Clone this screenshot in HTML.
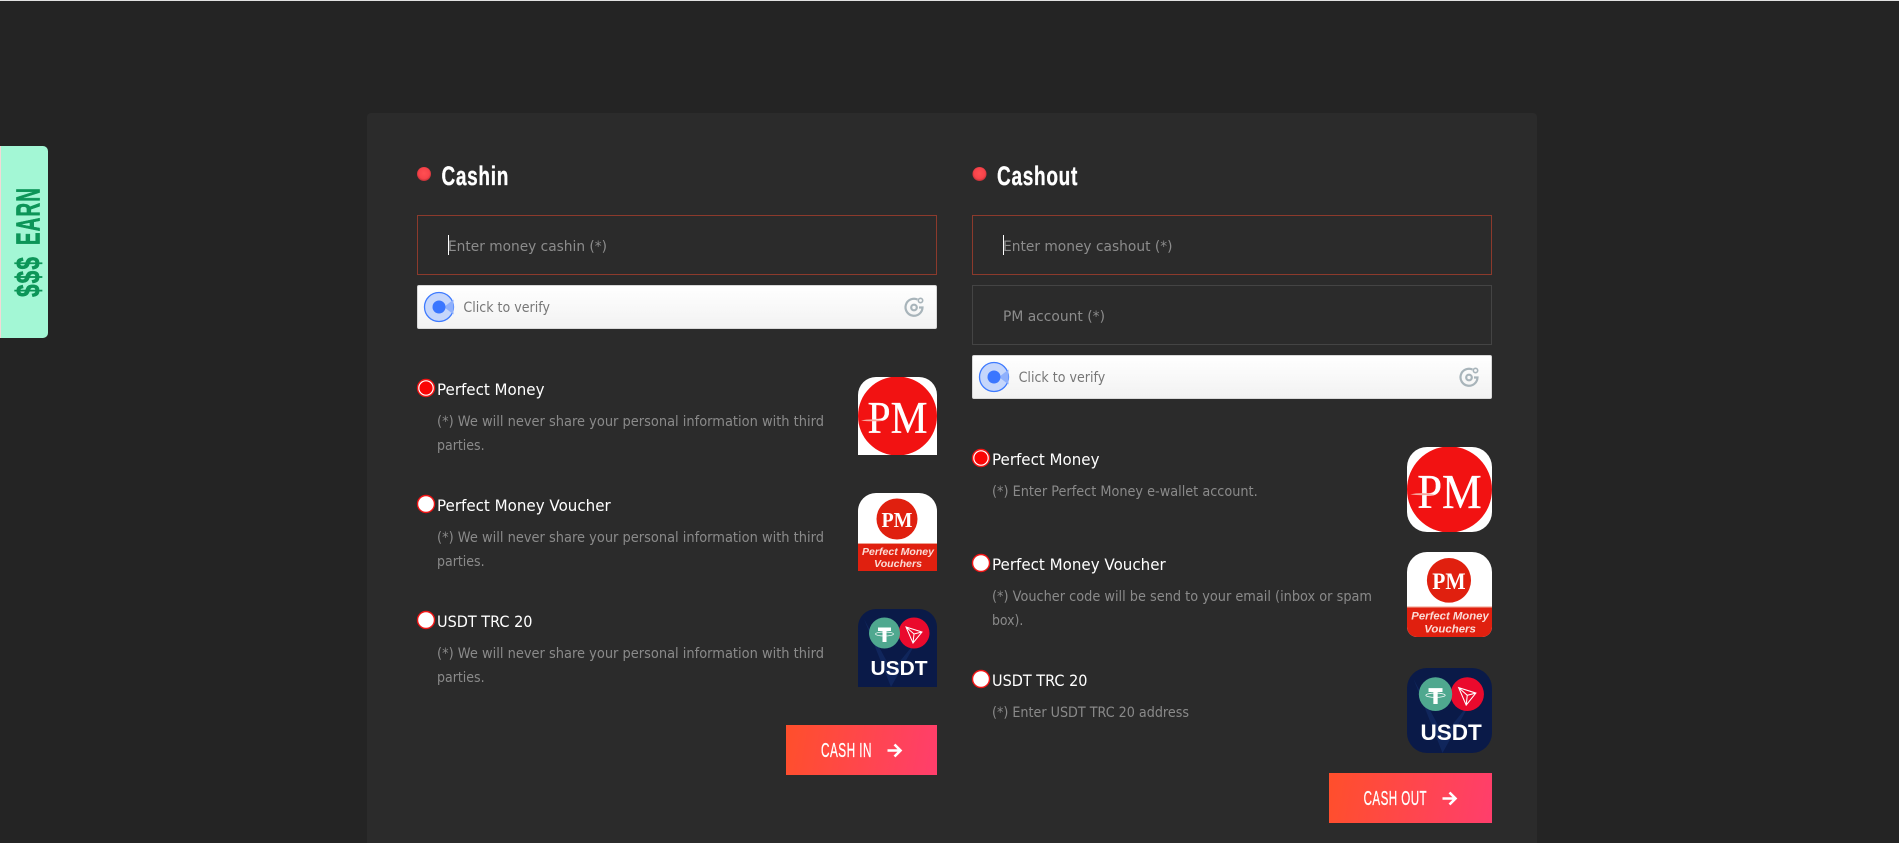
<!DOCTYPE html>
<html lang="en">
<head>
<meta charset="utf-8">
<title>Cashin / Cashout</title>
<style>
html,body{margin:0;padding:0;background:#242424;}
body{width:1899px;height:843px;overflow:hidden;position:relative;}
.a{position:absolute;box-sizing:border-box;}
#top{left:0;top:0;width:1899px;height:1px;background:#e2e2e2;}
#panel{left:367px;top:113px;width:1170px;height:730px;background:#2b2b2b;border-radius:4px 4px 0 0;}
#earn{left:0;top:146px;width:48px;height:192px;background:#a3f7d5;border-radius:0 5px 5px 0;border-left:1px solid #f2d9d6;}
.inp{height:60px;border:1px solid #8c3a2c;}
.inp.g{border-color:#444;}
.ver{height:44px;border:1px solid #d8d8d8;border-radius:2px;background:linear-gradient(#fff,#f2f2f2);}
.btn{height:50px;background:linear-gradient(100deg,#ff4f2b,#ff3e6c);}
.logo{display:block;overflow:hidden;}
#ov{left:0;top:0;}
text{font-family:"DejaVu Sans","Liberation Sans",sans-serif;}
.h{font-family:"Liberation Sans",sans-serif;font-weight:700;fill:#fff;font-size:27px;stroke:#fff;stroke-width:.35px;letter-spacing:1px;}
.l{font-size:16px;fill:#fff;}
.d{font-size:14.5px;fill:#8a8a8a;}
.p{font-size:14.5px;fill:#8c8c8c;}
.v{font-size:14.5px;fill:#777;}
.b{font-family:"Liberation Sans",sans-serif;font-size:20px;fill:#fff;stroke:#fff;stroke-width:.3px;letter-spacing:.8px;}
.e{font-family:"Liberation Sans",sans-serif;font-weight:700;font-size:33px;fill:#0c9558;stroke:#0c9558;stroke-width:.7px;}
</style>
</head>
<body>
<div class="a" id="top"></div>
<div class="a" id="panel"></div>
<div class="a" id="earn"></div>

<div class="a inp" style="left:417px;top:215px;width:520px;"></div>
<div class="a ver" style="left:417px;top:285px;width:520px;"></div>
<div class="a btn" style="left:786px;top:725px;width:151px;"></div>

<div class="a inp" style="left:972px;top:215px;width:520px;"></div>
<div class="a inp g" style="left:972px;top:285px;width:520px;"></div>
<div class="a ver" style="left:972px;top:355px;width:520px;"></div>
<div class="a btn" style="left:1329px;top:773px;width:163px;"></div>

<svg class="a" id="ov" width="1899" height="843" viewBox="0 0 1899 843" xmlns="http://www.w3.org/2000/svg">
  <defs>
    <radialGradient id="dot" cx="50%" cy="45%" r="55%">
      <stop offset="0%" stop-color="#ff4f52"/>
      <stop offset="70%" stop-color="#f7434a"/>
      <stop offset="100%" stop-color="#bd3036"/>
    </radialGradient>
  </defs>

  <!-- earn tab -->
  <text class="e" transform="translate(39.5,297) rotate(-90)" textLength="41" lengthAdjust="spacingAndGlyphs" letter-spacing="1.5">$$$</text>
  <text class="e" transform="translate(39.5,245) rotate(-90)" textLength="58" lengthAdjust="spacingAndGlyphs" letter-spacing="2">EARN</text>

  <!-- headings -->
  <circle cx="424" cy="174" r="7" fill="url(#dot)"/>
  <text class="h" x="441.5" y="185" textLength="67.5" lengthAdjust="spacingAndGlyphs">Cashin</text>
  <circle cx="979.5" cy="174" r="7" fill="url(#dot)"/>
  <text class="h" x="997" y="185" textLength="81" lengthAdjust="spacingAndGlyphs">Cashout</text>

  <!-- inputs -->
  <rect x="448" y="235" width="1" height="20" fill="#fff"/>
  <text class="p" x="448" y="251" textLength="159" lengthAdjust="spacingAndGlyphs">Enter money cashin (*)</text>
  <rect x="1003" y="235" width="1" height="20" fill="#fff"/>
  <text class="p" x="1003" y="251" textLength="169.5" lengthAdjust="spacingAndGlyphs">Enter money cashout (*)</text>
  <text class="p" x="1003" y="321" textLength="102" lengthAdjust="spacingAndGlyphs">PM account (*)</text>

  <!-- verify left -->
  <circle cx="439" cy="307" r="14.5" fill="#c5d6fb" stroke="#3f7bff" stroke-width="1.3"/>
  <path d="M444 307L453.5 299.5V314.5Z" fill="#8fb0fc"/>
  <circle cx="439" cy="307" r="6.5" fill="#3a76ff"/>
  <text class="v" x="463.4" y="312" textLength="86.6" lengthAdjust="spacingAndGlyphs">Click to verify</text>
  <g fill="none" stroke="#a8b4ba" stroke-width="2.2">
    <path d="M917.5 299.5A8.5 8.5 0 1 0 922.5 307.5H919"/>
    <circle cx="914" cy="307.5" r="2.8"/>
    <circle cx="920.5" cy="300.5" r="2.2" stroke-width="1.6"/>
  </g>

  <!-- verify right -->
  <circle cx="994" cy="377" r="14.5" fill="#c5d6fb" stroke="#3f7bff" stroke-width="1.3"/>
  <path d="M999 377L1008.5 369.5V384.5Z" fill="#8fb0fc"/>
  <circle cx="994" cy="377" r="6.5" fill="#3a76ff"/>
  <text class="v" x="1018.6" y="382" textLength="86.6" lengthAdjust="spacingAndGlyphs">Click to verify</text>
  <g fill="none" stroke="#a8b4ba" stroke-width="2.2">
    <path d="M1472.5 369.5A8.5 8.5 0 1 0 1477.5 377.5H1474"/>
    <circle cx="1469" cy="377.5" r="2.8"/>
    <circle cx="1475.5" cy="370.5" r="2.2" stroke-width="1.6"/>
  </g>

  <!-- left radios -->
  <circle cx="426" cy="388" r="8.5" fill="#fff" stroke="#f01414" stroke-width="1.4"/>
  <circle cx="426" cy="388" r="6.6" fill="#fa0505"/>
  <circle cx="426" cy="504" r="8.5" fill="#fff" stroke="#f01414" stroke-width="1.4"/>
  <circle cx="426" cy="620" r="8.5" fill="#fff" stroke="#f01414" stroke-width="1.4"/>

  <text class="l" x="437" y="395" textLength="107.5" lengthAdjust="spacingAndGlyphs">Perfect Money</text>
  <text class="d" x="437" y="426" textLength="387" lengthAdjust="spacingAndGlyphs">(*) We will never share your personal information with third</text>
  <text class="d" x="437" y="450" textLength="47.6" lengthAdjust="spacingAndGlyphs">parties.</text>

  <text class="l" x="437" y="511" textLength="173.7" lengthAdjust="spacingAndGlyphs">Perfect Money Voucher</text>
  <text class="d" x="437" y="542" textLength="387" lengthAdjust="spacingAndGlyphs">(*) We will never share your personal information with third</text>
  <text class="d" x="437" y="566" textLength="47.6" lengthAdjust="spacingAndGlyphs">parties.</text>

  <text class="l" x="437" y="627" textLength="95.5" lengthAdjust="spacingAndGlyphs">USDT TRC 20</text>
  <text class="d" x="437" y="658" textLength="387" lengthAdjust="spacingAndGlyphs">(*) We will never share your personal information with third</text>
  <text class="d" x="437" y="682" textLength="47.6" lengthAdjust="spacingAndGlyphs">parties.</text>

  <!-- right radios -->
  <circle cx="981" cy="458" r="8.5" fill="#fff" stroke="#f01414" stroke-width="1.4"/>
  <circle cx="981" cy="458" r="6.6" fill="#fa0505"/>
  <circle cx="981" cy="563" r="8.5" fill="#fff" stroke="#f01414" stroke-width="1.4"/>
  <circle cx="981" cy="679" r="8.5" fill="#fff" stroke="#f01414" stroke-width="1.4"/>

  <text class="l" x="992" y="465" textLength="107.5" lengthAdjust="spacingAndGlyphs">Perfect Money</text>
  <text class="d" x="992" y="496" textLength="265.7" lengthAdjust="spacingAndGlyphs">(*) Enter Perfect Money e-wallet account.</text>

  <text class="l" x="992" y="570" textLength="173.7" lengthAdjust="spacingAndGlyphs">Perfect Money Voucher</text>
  <text class="d" x="992" y="601" textLength="380" lengthAdjust="spacingAndGlyphs">(*) Voucher code will be send to your email (inbox or spam</text>
  <text class="d" x="992" y="625" textLength="31.4" lengthAdjust="spacingAndGlyphs">box).</text>

  <text class="l" x="992" y="686" textLength="95.5" lengthAdjust="spacingAndGlyphs">USDT TRC 20</text>
  <text class="d" x="992" y="717" textLength="197" lengthAdjust="spacingAndGlyphs">(*) Enter USDT TRC 20 address</text>

  <!-- buttons -->
  <text class="b" x="821" y="757" textLength="51" lengthAdjust="spacingAndGlyphs">CASH IN</text>
  <path d="M887.5 750.5H900M894.5 744.5L900.5 750.5L894.5 756.5" fill="none" stroke="#fff" stroke-width="2.6"/>
  <text class="b" x="1363.6" y="805" textLength="63.5" lengthAdjust="spacingAndGlyphs">CASH OUT</text>
  <path d="M1442.5 798.5H1455M1449.5 792.5L1455.5 798.5L1449.5 804.5" fill="none" stroke="#fff" stroke-width="2.6"/>
</svg>

<!-- left logos -->
<div class="a logo" style="left:858px;top:377px;width:79px;height:78px;border-radius:18px 18px 0 0;background:#fff;">
<svg width="79" height="78" viewBox="0 0 79 78"><circle cx="39.5" cy="39" r="39.5" fill="#f21212"/><text x="39.5" y="56" text-anchor="middle" textLength="60" lengthAdjust="spacingAndGlyphs" style="font-family:'Liberation Serif',serif;font-size:45px;fill:#fff;stroke:#fff;stroke-width:.3px;">PM</text><path d="M3 43.5C10 42 18 42 26 43.5C18 44.5 10 44.5 3 43.5Z" fill="#f7a89f"/></svg>
</div>
<div class="a logo" style="left:858px;top:493px;width:79px;height:78px;border-radius:18px 18px 0 0;background:#fff;">
<svg width="79" height="78" viewBox="0 0 79 78"><rect y="50" width="79" height="28" fill="#e0200f"/><rect y="50" width="79" height="1" fill="#f0a090"/><circle cx="39" cy="26" r="20.5" fill="#e0200f"/><text x="39" y="34" text-anchor="middle" textLength="31" lengthAdjust="spacingAndGlyphs" style="font-family:'Liberation Serif',serif;font-weight:700;font-size:21px;fill:#fff;">PM</text><text x="40" y="62" text-anchor="middle" textLength="72" lengthAdjust="spacingAndGlyphs" style="font-family:'Liberation Sans',sans-serif;font-weight:700;font-style:italic;font-size:10px;fill:#fbdcd6;">Perfect Money</text><text x="40" y="74" text-anchor="middle" textLength="48" lengthAdjust="spacingAndGlyphs" style="font-family:'Liberation Sans',sans-serif;font-weight:700;font-style:italic;font-size:10px;fill:#fbdcd6;">Vouchers</text></svg>
</div>
<div class="a logo" style="left:858px;top:609px;width:79px;height:78px;border-radius:18px 18px 0 0;background:#0a1a48;">
<svg width="79" height="78" viewBox="0 0 79 78"><path d="M6 10L33 78L60 30L34 62Z" fill="#10265c"/><circle cx="56" cy="24" r="15.5" fill="#ea0a2d"/><circle cx="26.5" cy="24" r="15.5" fill="#4fa88f"/><path d="M20 18.5H33V22H28.5V33H24.5V22H20Z" fill="#fff"/><ellipse cx="26.5" cy="25" rx="9" ry="2" fill="none" stroke="#fff" stroke-width=".7"/><path d="M48 18L64 23L55 34Z M48 18L56 25L64 23 M56 25L55 34" fill="none" stroke="#fff" stroke-width="1"/><text x="41" y="66" text-anchor="middle" textLength="57" lengthAdjust="spacingAndGlyphs" style="font-family:'Liberation Sans',sans-serif;font-weight:700;font-size:20px;fill:#fff;">USDT</text></svg>
</div>

<!-- right logos -->
<div class="a logo" style="left:1407px;top:447px;width:85px;height:85px;border-radius:20px;background:#fff;">
<svg width="85" height="85" viewBox="0 0 79 78" preserveAspectRatio="none"><circle cx="39.5" cy="39" r="39.5" fill="#f21212"/><text x="39.5" y="56" text-anchor="middle" textLength="60" lengthAdjust="spacingAndGlyphs" style="font-family:'Liberation Serif',serif;font-size:45px;fill:#fff;stroke:#fff;stroke-width:.3px;">PM</text><path d="M3 43.5C10 42 18 42 26 43.5C18 44.5 10 44.5 3 43.5Z" fill="#f7a89f"/></svg>
</div>
<div class="a logo" style="left:1407px;top:552px;width:85px;height:85px;border-radius:20px 20px 10px 10px;background:#fff;">
<svg width="85" height="85" viewBox="0 0 79 78" preserveAspectRatio="none"><rect y="50" width="79" height="28" fill="#e0200f"/><rect y="50" width="79" height="1" fill="#f0a090"/><circle cx="39" cy="26" r="20.5" fill="#e0200f"/><text x="39" y="34" text-anchor="middle" textLength="31" lengthAdjust="spacingAndGlyphs" style="font-family:'Liberation Serif',serif;font-weight:700;font-size:21px;fill:#fff;">PM</text><text x="40" y="62" text-anchor="middle" textLength="72" lengthAdjust="spacingAndGlyphs" style="font-family:'Liberation Sans',sans-serif;font-weight:700;font-style:italic;font-size:10px;fill:#fbdcd6;">Perfect Money</text><text x="40" y="74" text-anchor="middle" textLength="48" lengthAdjust="spacingAndGlyphs" style="font-family:'Liberation Sans',sans-serif;font-weight:700;font-style:italic;font-size:10px;fill:#fbdcd6;">Vouchers</text></svg>
</div>
<div class="a logo" style="left:1407px;top:668px;width:85px;height:85px;border-radius:20px;background:#0a1a48;">
<svg width="85" height="85" viewBox="0 0 79 78" preserveAspectRatio="none"><path d="M6 10L33 78L60 30L34 62Z" fill="#10265c"/><circle cx="56" cy="24" r="15.5" fill="#ea0a2d"/><circle cx="26.5" cy="24" r="15.5" fill="#4fa88f"/><path d="M20 18.5H33V22H28.5V33H24.5V22H20Z" fill="#fff"/><ellipse cx="26.5" cy="25" rx="9" ry="2" fill="none" stroke="#fff" stroke-width=".7"/><path d="M48 18L64 23L55 34Z M48 18L56 25L64 23 M56 25L55 34" fill="none" stroke="#fff" stroke-width="1"/><text x="41" y="66" text-anchor="middle" textLength="57" lengthAdjust="spacingAndGlyphs" style="font-family:'Liberation Sans',sans-serif;font-weight:700;font-size:20px;fill:#fff;">USDT</text></svg>
</div>
</body>
</html>
